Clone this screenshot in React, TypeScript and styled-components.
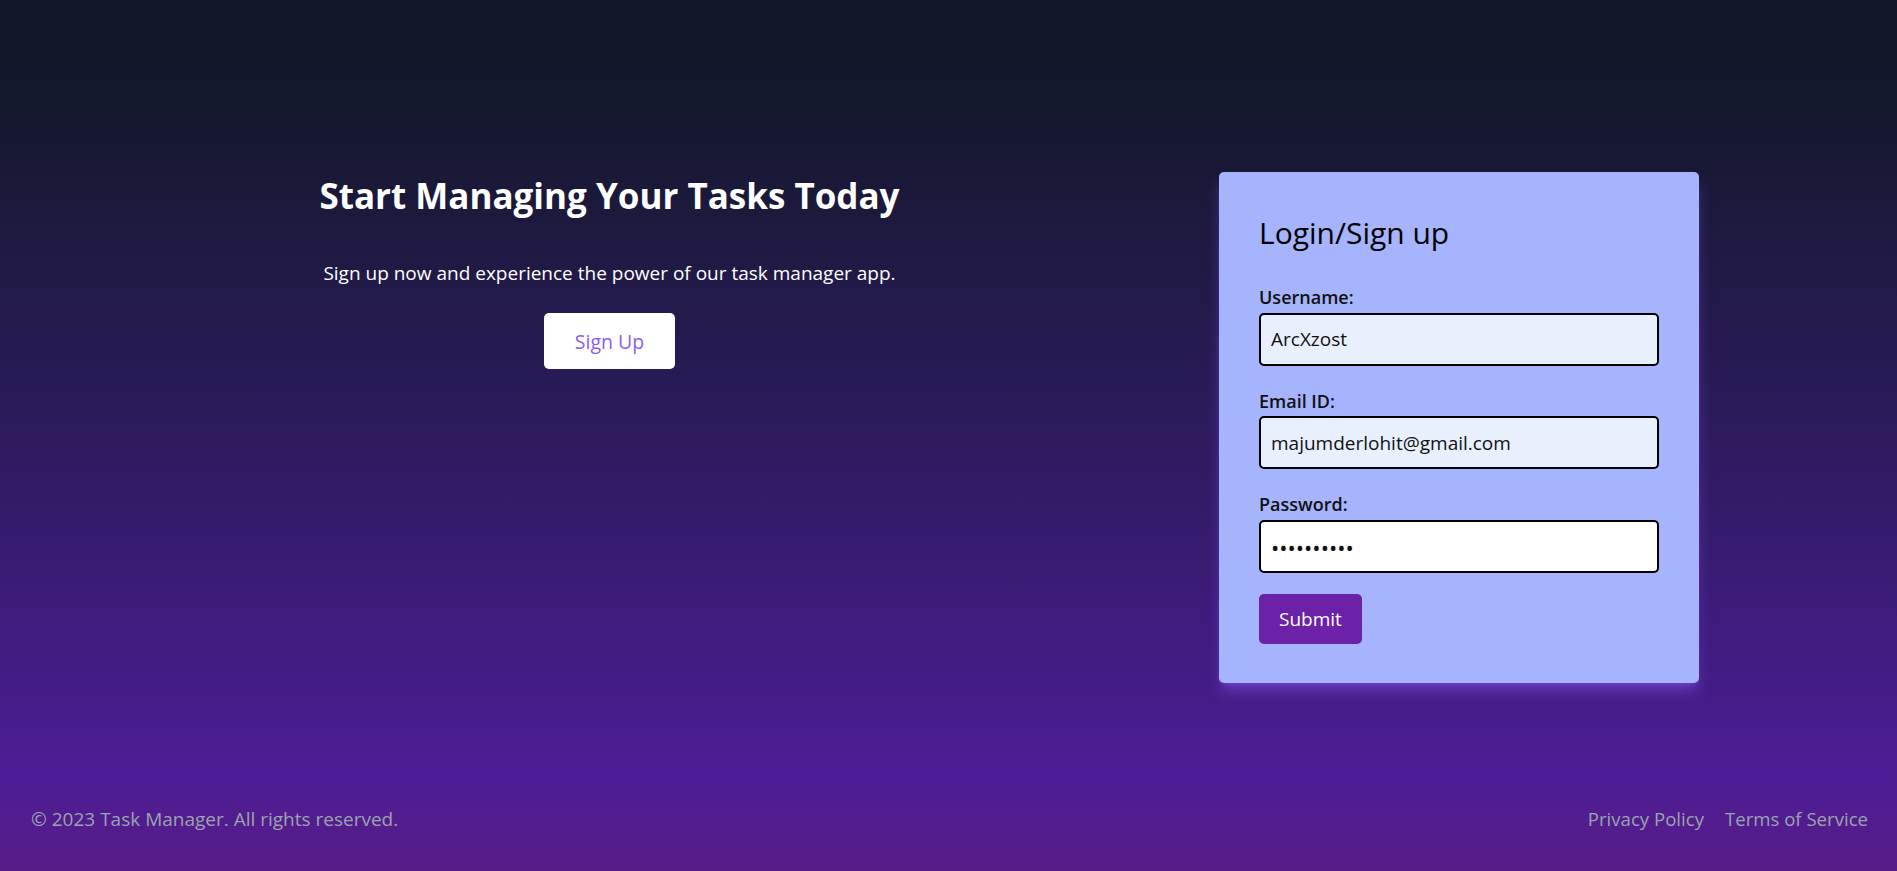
import React from "react";
import styled, { createGlobalStyle } from "styled-components";

const GlobalStyle = createGlobalStyle`
  html, body {
    margin: 0;
    padding: 0;
  }
  body {
    font-family: "Open Sans", "Noto Sans", "Liberation Sans", sans-serif;
  }
  * { box-sizing: border-box; }
`;

const Page = styled.div`
  min-height: 100vh;
  display: flex;
  flex-direction: column;
  background: linear-gradient(
    to bottom,
    #111827 0%,
    #121829 9%,
    #2d1b5e 50%,
    #4c1d95 89%,
    #581c87 100%
  );
`;

const Main = styled.main`
  flex: 1;
  display: flex;
  justify-content: space-between;
  align-items: flex-start;
  padding: 172px 198px 0 318px;
`;

const Hero = styled.section`
  width: 583px;
  display: flex;
  flex-direction: column;
  align-items: center;
  text-align: center;
  color: #ffffff;
`;

const HeroTitle = styled.h1`
  margin: 1.5px 0 0;
  font-size: 35px;
  line-height: 1.263;
  font-weight: 700;
  white-space: nowrap;
`;

const HeroText = styled.p`
  margin: 42px 0 0;
  font-size: 19px;
  line-height: 1.4;
  font-weight: 400;
  white-space: nowrap;
`;

const SignUpButton = styled.button`
  margin-top: 27px;
  height: 56px;
  padding: 0 31px;
  border: none;
  border-radius: 5px;
  background: #ffffff;
  color: #8b5cf6;
  font-family: inherit;
  font-size: 19.5px;
  font-weight: 500;
  cursor: pointer;
`;

const Card = styled.div`
  width: 480px;
  padding: 40px 40px 39px;
  background: #a5b4fc;
  border-radius: 5px;
  box-shadow: 0 10px 15px -3px rgba(139, 92, 246, 0.5),
    0 4px 6px -4px rgba(139, 92, 246, 0.5);
`;

const CardTitle = styled.h2`
  margin: 0 0 30.8px;
  font-size: 30px;
  line-height: 1.405;
  font-weight: 500;
  color: #000000;
`;

const Form = styled.form`
  display: flex;
  flex-direction: column;
  gap: 23px;
`;

const Field = styled.div`
  display: flex;
  flex-direction: column;
  gap: 2.5px;
`;

const Label = styled.label`
  font-size: 18px;
  line-height: 1.4;
  font-weight: 600;
  color: #111111;
`;

const Input = styled.input<{ $filled?: boolean; $masked?: boolean }>`
  width: 100%;
  height: 53px;
  padding: 0 10px;
  border: 2px solid #000000;
  border-radius: 5px;
  background: ${(p) => (p.$filled ? "#e8f0fe" : "#ffffff")};
  color: #111111;
  font-family: inherit;
  font-size: ${(p) => (p.$masked ? "22px" : "19px")};
  outline: none;
`;

const SubmitButton = styled.button`
  align-self: flex-start;
  margin-top: -2px;
  height: 50px;
  padding: 0 20px;
  border: none;
  border-radius: 5px;
  background: #6b21a8;
  color: #ffffff;
  font-family: inherit;
  font-size: 19px;
  font-weight: 400;
  cursor: pointer;
`;

const Footer = styled.footer`
  display: flex;
  justify-content: space-between;
  align-items: center;
  padding: 29.5px 29px 40.7px 31px;
  color: #9ca3af;
  font-size: 19px;
  line-height: 1.2;
`;

const FooterLinks = styled.nav`
  display: flex;
  gap: 21px;
  font-size: 18.6px;
`;

const FooterLink = styled.a`
  color: #9ca3af;
  text-decoration: none;
`;

export default function App() {
  return (
    <>
      <GlobalStyle />
      <Page>
        <Main>
          <Hero>
            <HeroTitle>Start Managing Your Tasks Today</HeroTitle>
            <HeroText>
              Sign up now and experience the power of our task manager app.
            </HeroText>
            <SignUpButton type="button">Sign Up</SignUpButton>
          </Hero>
          <Card>
            <CardTitle>Login/Sign up</CardTitle>
            <Form onSubmit={(e) => e.preventDefault()}>
              <Field>
                <Label htmlFor="username">Username:</Label>
                <Input id="username" $filled defaultValue="ArcXzost" />
              </Field>
              <Field>
                <Label htmlFor="email">Email ID:</Label>
                <Input
                  id="email"
                  $filled
                  defaultValue="majumderlohit@gmail.com"
                />
              </Field>
              <Field>
                <Label htmlFor="password">Password:</Label>
                <Input
                  id="password"
                  type="password"
                  $masked
                  defaultValue="ArcXzost12"
                />
              </Field>
              <SubmitButton type="submit">Submit</SubmitButton>
            </Form>
          </Card>
        </Main>
        <Footer>
          <span>© 2023 Task Manager. All rights reserved.</span>
          <FooterLinks>
            <FooterLink href="#">Privacy Policy</FooterLink>
            <FooterLink href="#">Terms of Service</FooterLink>
          </FooterLinks>
        </Footer>
      </Page>
    </>
  );
}
